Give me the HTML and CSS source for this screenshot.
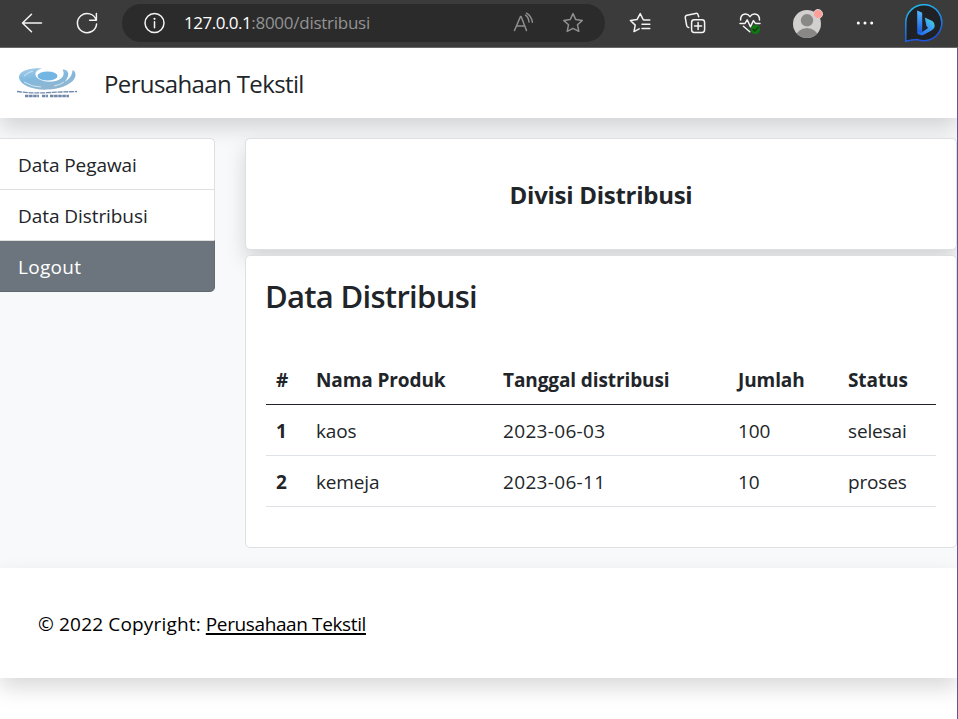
FILE: index.html
```
<!DOCTYPE html>
<html lang="id">
<head>
<meta charset="utf-8">
<title>Perusahaan Tekstil</title>
<link rel="stylesheet" href="styles.css">
</head>
<body>
<header class="browser">
  <svg class="icon back" width="22" height="22" viewBox="0 0 22 22"><path d="M20.500 11H1.500M10.500 2.200L1.500 11l9 8.800"/></svg>
  <svg class="icon reload" width="22" height="22" viewBox="0 0 22 22"><path d="M20.2 8.2A9.6 9.6 0 1 0 20.6 12M20.4 1.5v6.8h-6.8"/></svg>
  <div class="address">
    <svg class="icon" width="22" height="22" viewBox="0 0 22 22"><circle cx="11.500" cy="11" r="9.5"/><path d="M11.500 9.7v6"/><circle class="dot" cx="11.500" cy="6.8" r="1.1"/></svg>
    <div class="url"><span class="host">127.0.0.1</span><span class="path">:8000/distribusi</span></div>
    <svg class="icon dim read" width="22" height="22" viewBox="0 0 22 22"><path d="M2.500 18.500L8.500 4.500h.6L14.500 18.500M4.600 14h8M13.500 3.2q3 2 3.5 6.8M14.500 1.2q5 3 5.9 9"/></svg>
    <svg class="icon dim" width="22" height="22" viewBox="0 0 22 22"><path d="M11 1.6l2.8 6 6.5.8-4.8 4.4 1.3 6.6L11 16.3l-5.8 3.1 1.3-6.6-4.8-4.4 6.5-.8z"/></svg>
  </div>
  <svg class="icon fav" width="22" height="22" viewBox="0 0 22 22"><path d="M20.8 8h-6.4L11.2 1.6 8 7.6l-6.6.9 4.8 4.6L5 19.6l5.2-2.8M13 12.3h7.8M13 16.6h7.8"/></svg>
  <svg class="icon coll" width="22" height="22" viewBox="0 0 22 22"><rect x="7.6" y="7.8" width="13" height="12.6" rx="2.6"/><path d="M14.1 10.6v7M10.6 14.1h7M4.8 15.5c-1.3-.2-1.8-.7-2.1-1.9L1.3 5.8c-.2-1.4.3-2.3 1.7-2.6l8.6-1.8c1.4-.2 2.3.4 2.6 1.7l.5 1.7"/></svg>
  <svg class="icon heart" width="22" height="22" viewBox="0 0 22 22"><path d="M1.6 8C1.4 1.3 8 .5 11 4.6 14 .5 20.7 1.3 20.5 8M1 11.4h5l2.2-3.6 3.2 7 3-6.2 2 2.8H21M4.4 14.2l6.4 5.6"/><circle class="ok" cx="16.4" cy="17.4" r="4.6"/><path class="tick" d="M14.2 17.4l1.6 1.6 3-3.2"/></svg>
  <svg class="avatar" width="32" height="32" viewBox="0 0 32 32"><defs><clipPath id="face"><circle cx="15" cy="17" r="14"/></clipPath></defs><circle cx="15" cy="17" r="14" fill="#d2d0ce"/><g clip-path="url(#face)" fill="#8a8886"><circle cx="15" cy="13.3" r="6.2"/><ellipse cx="15" cy="30" rx="11" ry="9"/></g><circle cx="26" cy="7" r="4.5" fill="#ff9f98" stroke="#d8d5d3"/></svg>
  <svg class="more" width="18" height="6" viewBox="0 0 18 6"><g fill="#fff"><circle cx="2.3" cy="3" r="1.5"/><circle cx="9" cy="3" r="1.5"/><circle cx="15.7" cy="3" r="1.5"/></g></svg>
  <svg class="bing" width="40" height="40" viewBox="0 0 40 40"><defs><linearGradient id="ring" x1="0" y1="0" x2="0.3" y2="1"><stop offset="0" stop-color="#22c5ee"/><stop offset="1" stop-color="#1d55dc"/></linearGradient><linearGradient id="stem" x1="0" y1="0" x2="0" y2="1"><stop offset="0" stop-color="#55b8ff"/><stop offset="1" stop-color="#1453dd"/></linearGradient><linearGradient id="bowl" x1="0" y1="1" x2="1" y2="0"><stop offset="0" stop-color="#1b62ea"/><stop offset=".6" stop-color="#3ba0f5"/><stop offset="1" stop-color="#45e6c2"/></linearGradient></defs><path d="M1.8 38.2V20A18 18 0 1 1 13.5 36.6q-5.5 0-11.7 1.6z" fill="#202124" stroke="url(#ring)" stroke-width="1.5"/><path d="M13.2 7.500l5 2.2v18l0 1-4.3 3.200-.7-2.8z" fill="url(#stem)"/><path d="M20.8 14.4l7.5 3.5q2.4 1.4 2.4 5 0 2.8-2.4 4.2l-9 5q-4.8 1-6-3.3 2 1.8 5.6-.4l5.2-3.5-1.7-1.8z" fill="url(#bowl)"/></svg>
</header>
<div class="page">
  <nav class="navbar">
    <svg class="logo" width="90" height="38" viewBox="0 0 90 38"><defs><linearGradient id="swirl" x1="0" y1="0" x2="0.4" y2="1"><stop offset="0" stop-color="#a5cfea"/><stop offset=".5" stop-color="#80b9df"/><stop offset="1" stop-color="#91b5cf"/></linearGradient></defs><g class="soft"><path d="M42 4.500C30 3 18 7 19 14c2 8 15 12.500 30 11.500C63 24.500 74 19 75.500 12c0-4-1-5-3-6 0 5-3 9-8 12 4-5 5-9 2-11.500-1-1-3-1-4-1 3 5 0 10-7 11.500-9 2-19-1-20-6-.5-3 2-5.500 6.500-6.500z" fill="url(#swirl)"/><ellipse cx="47.500" cy="12" rx="10" ry="4.600" fill="#74b6e3"/><path d="M24 12q4-4 9-5M24 18q8 5 17 5M54 22q6-1 10-4" fill="none" stroke="#cfe6f4" stroke-width="1"/><path d="M17 27.500q15 2 30 1.200T77 27.500" fill="none" stroke="#7189aa" stroke-width="1.300" stroke-dasharray="5 .8"/><path d="M25 32h14M42 32h6M50 32h19" fill="none" stroke="#7187a8" stroke-width="2.4" stroke-dasharray="3.500 .6"/></g></svg>
    <span class="brand">Perusahaan Tekstil</span>
  </nav>
  <div class="content">
    <aside class="menu">
      <a class="item">Data Pegawai</a>
      <a class="item">Data Distribusi</a>
      <a class="item active">Logout</a>
    </aside>
    <main class="main">
      <section class="card title-card"><h5>Divisi Distribusi</h5></section>
      <section class="card data-card">
        <h2>Data Distribusi</h2>
        <table>
          <colgroup><col class="c1"><col class="c2"><col class="c3"><col class="c4"><col></colgroup>
          <thead><tr><th>#</th><th>Nama Produk</th><th>Tanggal distribusi</th><th>Jumlah</th><th>Status</th></tr></thead>
          <tbody>
            <tr><th>1</th><td>kaos</td><td class="date">2023-06-03</td><td>100</td><td>selesai</td></tr>
            <tr><th>2</th><td>kemeja</td><td class="date">2023-06-11</td><td>10</td><td>proses</td></tr>
          </tbody>
        </table>
      </section>
    </main>
  </div>
  <footer class="footer"><span class="copy">© 2022 Copyright:</span> <a class="link">Perusahaan Tekstil</a></footer>
</div>
</body>
</html>
```
FILE: styles.css
```
* { box-sizing: border-box; }
body {
  margin: 0;
  height: 719px;
  overflow: hidden;
  background: #fff;
  color: #212529;
  font-family: "Open Sans", "Noto Sans", sans-serif;
  font-size: 19px;
  line-height: 30px;
}
.browser {
  display: flex;
  align-items: center;
  height: 48px;
  padding: 0 14px 1px 21px;
  background: #3b3b3b;
  border-bottom: 1px solid #69676a;
}
.icon { flex: none; fill: none; stroke: #f4f4f4; stroke-width: 1.5; stroke-linecap: round; stroke-linejoin: round; }
.icon.dim { stroke: #8f8f8f; }
.icon .dot { fill: #f4f4f4; stroke: none; }
.icon .ok { fill: #0f7b0f; stroke: none; }
.icon .tick { stroke: #173b17; }
.reload { margin-left: 33px; }
.address {
  display: flex;
  align-items: center;
  width: 483px;
  height: 38px;
  margin-left: 24px;
  padding: 0 21px;
  border-radius: 19px;
  background: #2b2b2b;
}
.url { margin-left: 19px; font-size: 17px; line-height: 24px; white-space: nowrap; }
.host { color: #fff; letter-spacing: -.5px; }
.path { color: #939393; letter-spacing: -.26px; }
.read { margin-left: auto; margin-right: 28px; }
.fav { margin-left: 24px; }
.coll { margin-left: 33px; }
.heart { margin-left: 33px; }
.avatar { flex: none; margin-left: 31px; }
.more { flex: none; margin-left: 32px; }
.bing { flex: none; margin-left: auto; }
.page { height: 671px; border-right: 1px solid #6b519a; overflow: hidden; }
.navbar {
  display: flex;
  align-items: center;
  position: relative;
  z-index: 1;
  height: 70px;
  background: #fff;
  box-shadow: 0 10px 20px rgba(0, 0, 0, .15);
}
.logo { flex: none; }
.soft { filter: blur(.5px); }
.brand { margin-left: 14px; padding-top: 2px; font-size: 24px; line-height: 38px; letter-spacing: -.62px; }
.content {
  display: flex;
  gap: 30px;
  height: 450px;
  padding-top: 20px;
  background: #f8f9fa;
}
.menu { width: 215px; position: relative; z-index: 2; }
.item {
  display: block;
  height: 51px;
  padding: 11px 18px 9px;
  background: #fff;
  border: 1px solid #dfdfdf;
  border-width: 1px 1px 0 0;
  letter-spacing: -.07px;
}
.item:first-child { border-top-right-radius: 5px; }
.item.active {
  height: 52px;
  padding-top: 11px;
  color: #fff;
  background: #6c757d;
  border-color: #dfdfdf #636b73 #5f676f;
  border-width: 1px 1px 1px 0;
  border-bottom-right-radius: 5px;
  letter-spacing: .3px;
}
.main { flex: 1; position: relative; z-index: 2; }
.card { background: #fff; border: 1px solid #dfdfdf; border-radius: 5px; }
.title-card {
  display: flex;
  align-items: center;
  justify-content: center;
  height: 112px;
  padding-top: 2px;
  box-shadow: 0 10px 20px rgba(0, 0, 0, .15);
}
h5 { margin: 0; font-size: 24px; font-weight: 700; letter-spacing: -.27px; }
.data-card { position: relative; height: 293px; margin-top: 5px; padding: 20px; }
h2 { margin: 0 0 38px -1px; font-size: 31px; line-height: 40px; font-weight: 600; letter-spacing: -.7px; }
table { width: 100%; table-layout: fixed; border-collapse: separate; border-spacing: 0; }
.c1 { width: 40px; }
.c2 { width: 187px; }
.c3 { width: 235px; }
.c4 { width: 110px; }
th, td {
  height: 51px;
  padding: 11px 10px 9px;
  text-align: left;
  border-bottom: 1px solid #dee2e6;
  white-space: nowrap;
  letter-spacing: -.15px;
}
thead th { border-color: #212529; letter-spacing: -.1px; }
.date { letter-spacing: .33px; }
.footer {
  position: relative;
  z-index: 1;
  height: 110px;
  padding: 41px 38px;
  background: #fff;
  color: #000;
  box-shadow: 0 10px 20px rgba(0, 0, 0, .15);
}
.copy { letter-spacing: .17px; }
.link { letter-spacing: -.38px; text-decoration: underline; text-decoration-thickness: 2px; text-underline-offset: 2px; }
```
